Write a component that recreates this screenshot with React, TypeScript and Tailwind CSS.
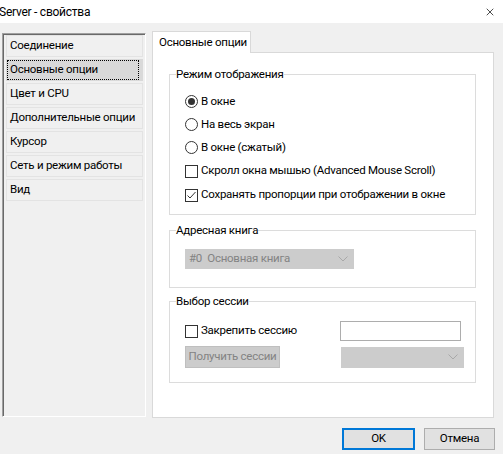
import { X } from "lucide-react";

const items = [
  "Соединение",
  "Основные опции",
  "Цвет и CPU",
  "Дополнительные опции",
  "Курсор",
  "Сеть и режим работы",
  "Вид",
];

function Radio({ checked, label }: { checked?: boolean; label: string }) {
  return (
    <div className="flex items-center h-[23px]">
      <span className="w-[13px] h-[13px] rounded-full border border-[#333] bg-white flex items-center justify-center">
        {checked && <span className="w-[7px] h-[7px] rounded-full bg-[#333]" />}
      </span>
      <span className="ml-[3px]">{label}</span>
    </div>
  );
}

function Check({ checked, label }: { checked?: boolean; label: string }) {
  return (
    <div className="flex items-center h-[24px]">
      <span className="w-[13px] h-[13px] border border-[#333] bg-white flex items-center justify-center">
        {checked && (
          <svg width="11" height="11" viewBox="0 0 11 11">
            <path d="M1.5 5.5 L4 8 L9.5 2" fill="none" stroke="#333" strokeWidth="1" />
          </svg>
        )}
      </span>
      <span className="ml-[3px]">{label}</span>
    </div>
  );
}

function Chevron() {
  return (
    <svg width="10" height="6" viewBox="0 0 10 6">
      <path d="M0.5 0.5 L5 5 L9.5 0.5" fill="none" stroke="#a8a8a8" strokeWidth="1" />
    </svg>
  );
}

function Group({ title, className, children }: { title: string; className: string; children?: React.ReactNode }) {
  return (
    <div className={"relative border border-[#dcdcdc] " + className}>
      {/* legend over the border line */}
      <span className="absolute left-[6px] top-[-9px] bg-white leading-[16px]">{title}</span>
      {children}
    </div>
  );
}

export default function App() {
  return (
    <div
      className="w-[503px] h-[454px] bg-[#f0f0f0] text-[11.5px] tracking-[-0.25px] text-black overflow-hidden whitespace-nowrap"
      style={{ fontFamily: 'Roboto, "Liberation Sans", sans-serif' }}
    >
      {/* Title bar */}
      <div className="h-[23px] bg-white flex items-center justify-between">
        <span className="ml-[-1px] text-[12px]">Server - свойства</span>
        <X className="w-[12px] h-[12px] mr-[7px]" strokeWidth={1.4} />
      </div>

      <div className="flex pl-[2px] pt-[8px]">
        {/* Left list */}
        <div className="mt-[2px] w-[144px] h-[384px] border border-t-[#a0a0a0] border-l-[#a0a0a0] border-r-white border-b-white">
          <div className="h-full border-t border-l border-[#696969] px-[2px] flex flex-col gap-[2px]">
            {items.map((t, i) => (
              <div
                key={t}
                className={
                  "h-[22px] flex items-center pl-[3px] border " +
                  (i === 1 ? "bg-[#d9d9d9] border-[#d9d9d9]" : "border-[#e3e3e3]")
                }
              >
                {i === 1 ? (
                  <span className="w-full h-full flex items-center border border-dotted border-black -ml-[3px] pl-[2px]">
                    {t}
                  </span>
                ) : (
                  t
                )}
              </div>
            ))}
          </div>
        </div>

        {/* Right tab area */}
        <div className="ml-[6px] w-[342px]">
          <div className="h-[21px] flex">
            <div className="w-[99px] h-[22px] bg-white border border-b-0 border-[#d9d9d9] pl-[6px] flex items-center relative z-10">
              Основные опции
            </div>
          </div>
          <div className="h-[366px] bg-white border border-[#d9d9d9] pl-[16px] pt-[21px]">
            <Group title="Режим отображения" className="w-[307px] h-[141px] pl-[15px] pt-[15px]">
              <Radio checked label="В окне" />
              <Radio label="На весь экран" />
              <Radio label="В окне (сжатый)" />
              <Check label="Скролл окна мышью (Advanced Mouse Scroll)" />
              <Check checked label="Сохранять пропорции при отображении в окне" />
            </Group>

            <Group title="Адресная книга" className="w-[307px] h-[58px] mt-[15px] pl-[15px] pt-[18px]">
              <div className="w-[169px] h-[20px] bg-[#cccccc] border border-[#cccccc] flex items-center justify-between pl-[3px] pr-[5px] text-[#838383]">
                <span>#0&nbsp; Основная книга</span>
                <Chevron />
              </div>
            </Group>

            <Group title="Выбор сессии" className="w-[307px] h-[82px] mt-[13px] pl-[15px] pt-[17px]">
              <div className="flex items-center justify-between pr-[14px]">
                <Check label="Закрепить сессию" />
                <div className="w-[121px] h-[20px] bg-white border border-[#adadad]" />
              </div>
              <div className="flex items-center justify-between pr-[11px] mt-[3px]">
                <div className="w-[95px] h-[22px] bg-[#cccccc] border border-[#bfbfbf] flex items-center justify-center text-[#838383]">
                  Получить сессии
                </div>
                <div className="w-[123px] h-[21px] bg-[#cccccc] border border-[#cccccc] flex items-center justify-end pr-[5px]">
                  <Chevron />
                </div>
              </div>
            </Group>
          </div>
        </div>
      </div>

      {/* Bottom buttons */}
      <div className="flex justify-end gap-[9px] pr-[8px] mt-[10px]">
        <div className="w-[73px] h-[22px] bg-[#e1e1e1] border-2 border-[#0078d7] flex items-center justify-center">
          OK
        </div>
        <div className="w-[71px] h-[22px] bg-[#e1e1e1] border border-[#adadad] flex items-center justify-center">
          Отмена
        </div>
      </div>
    </div>
  );
}
